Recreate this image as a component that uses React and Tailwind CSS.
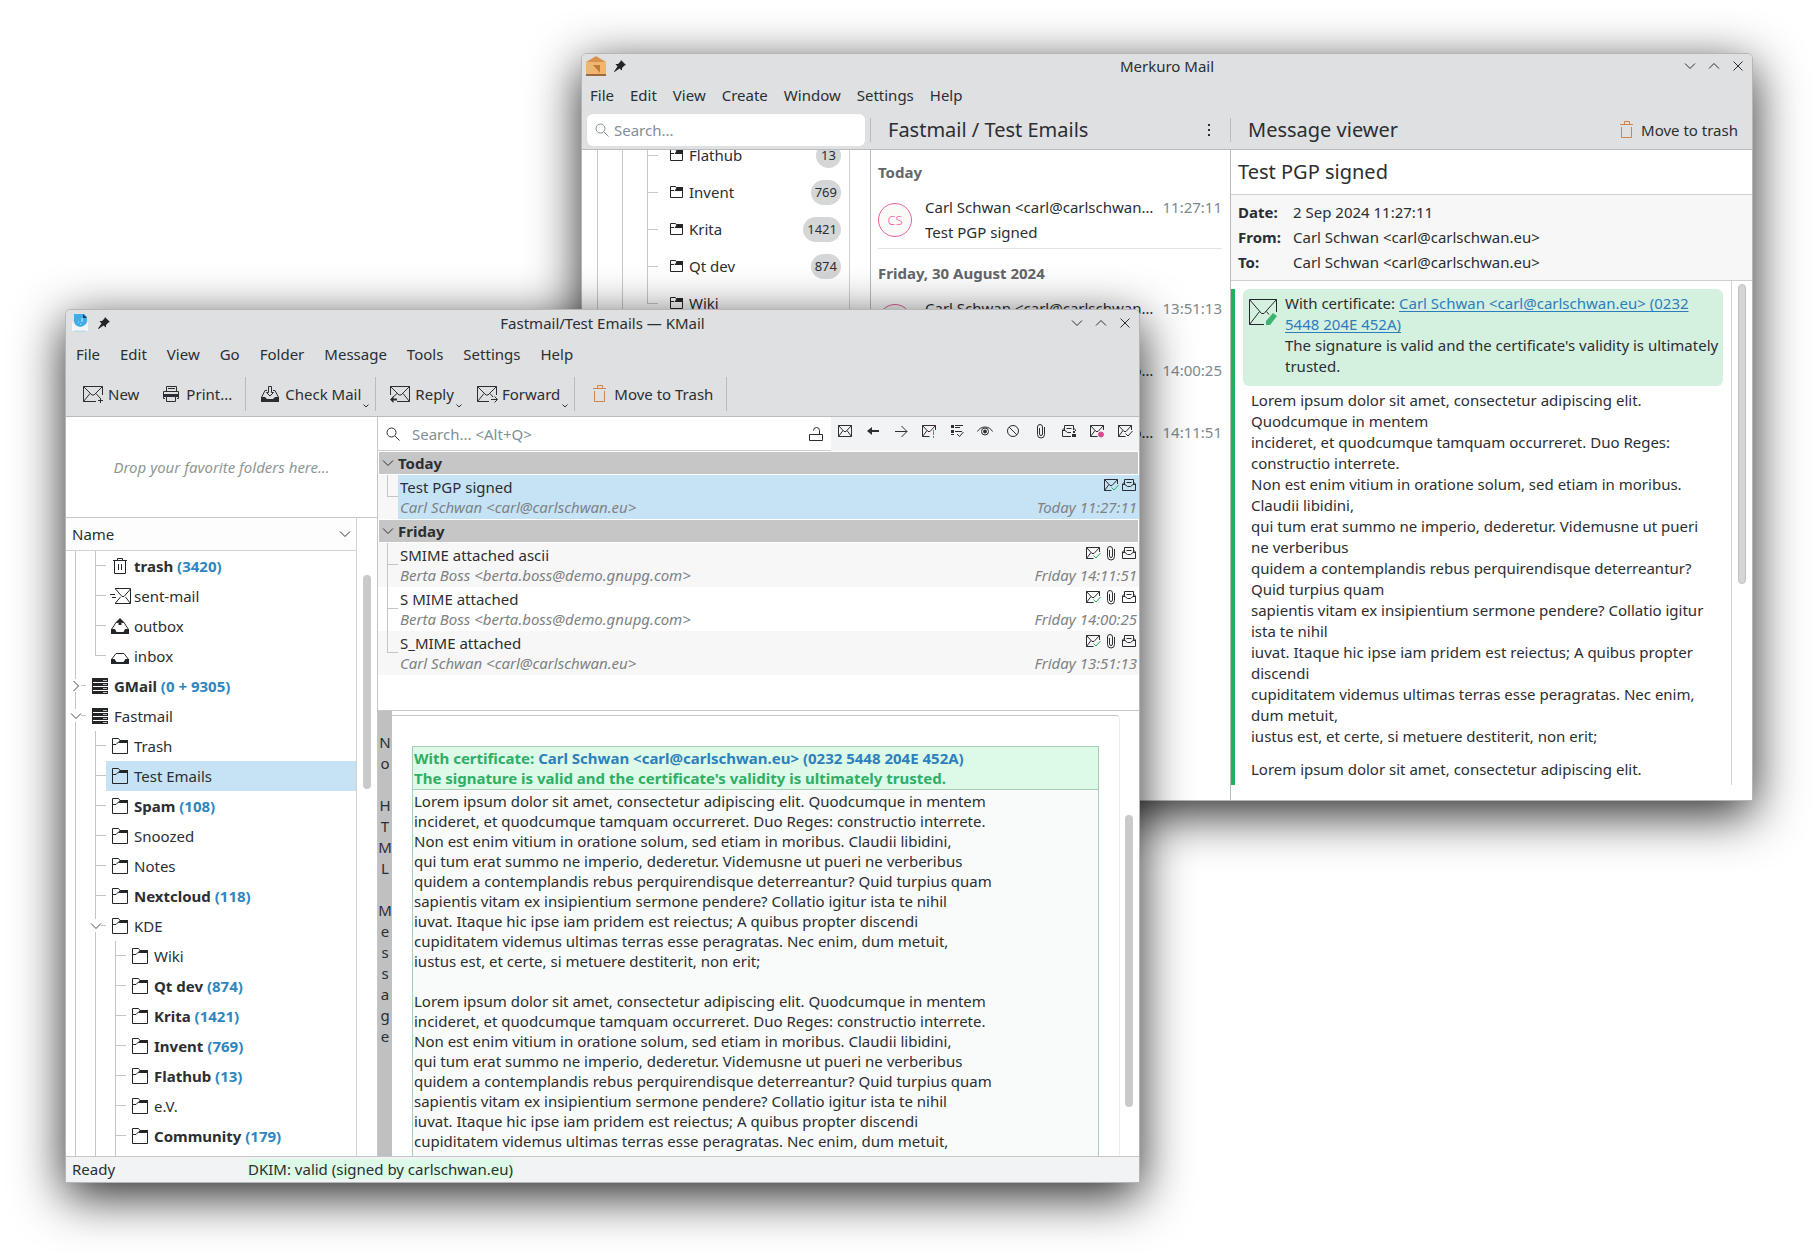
import React from "react";
import clsx from "clsx";

const LOREM = [
  "Lorem ipsum dolor sit amet, consectetur adipiscing elit. Quodcumque in mentem",
  "incideret, et quodcumque tamquam occurreret. Duo Reges: constructio interrete.",
  "Non est enim vitium in oratione solum, sed etiam in moribus. Claudii libidini,",
  "qui tum erat summo ne imperio, dederetur. Videmusne ut pueri ne verberibus",
  "quidem a contemplandis rebus perquirendisque deterreantur? Quid turpius quam",
  "sapientis vitam ex insipientium sermone pendere? Collatio igitur ista te nihil",
  "iuvat. Itaque hic ipse iam pridem est reiectus; A quibus propter discendi",
  "cupiditatem videmus ultimas terras esse peragratas. Nec enim, dum metuit,",
  "iustus est, et certe, si metuere destiterit, non erit;",
];

const kmailFolders = [
  { name: "trash", count: "3420", icon: "bin", guides: ["line", "tee"] },
  { name: "sent-mail", icon: "sent", guides: ["line", "tee"] },
  { name: "outbox", icon: "outbox", guides: ["line", "tee"] },
  { name: "inbox", icon: "inbox", guides: ["line", "end"] },
  { name: "GMail", count: "0 + 9305", icon: "server", guides: ["closed"] },
  { name: "Fastmail", icon: "server", guides: ["open"] },
  { name: "Trash", icon: "folder", guides: ["line", "tee"] },
  { name: "Test Emails", icon: "folder", guides: ["line", "tee"], selected: true },
  { name: "Spam", count: "108", icon: "folder", guides: ["line", "tee"] },
  { name: "Snoozed", icon: "folder", guides: ["line", "tee"] },
  { name: "Notes", icon: "folder", guides: ["line", "tee"] },
  { name: "Nextcloud", count: "118", icon: "folder", guides: ["line", "tee"] },
  { name: "KDE", icon: "folder", guides: ["line", "open"] },
  { name: "Wiki", icon: "folder", guides: ["line", "line", "tee"] },
  { name: "Qt dev", count: "874", icon: "folder", guides: ["line", "line", "tee"] },
  { name: "Krita", count: "1421", icon: "folder", guides: ["line", "line", "tee"] },
  { name: "Invent", count: "769", icon: "folder", guides: ["line", "line", "tee"] },
  { name: "Flathub", count: "13", icon: "folder", guides: ["line", "line", "tee"] },
  { name: "e.V.", icon: "folder", guides: ["line", "line", "tee"] },
  { name: "Community", count: "179", icon: "folder", guides: ["line", "line", "tee"] },
];

const merkuroFolders = [
  { name: "Flathub", count: "13" },
  { name: "Invent", count: "769" },
  { name: "Krita", count: "1421" },
  { name: "Qt dev", count: "874" },
  { name: "Wiki", last: true },
];

const kmailGroups = [
  {
    day: "Today",
    mails: [
      {
        subject: "Test PGP signed",
        from: "Carl Schwan <carl@carlschwan.eu>",
        time: "Today 11:27:11",
        selected: true,
      },
    ],
  },
  {
    day: "Friday",
    mails: [
      {
        subject: "SMIME attached ascii",
        from: "Berta Boss <berta.boss@demo.gnupg.com>",
        time: "Friday 14:11:51",
        attachment: true,
      },
      {
        subject: "S MIME attached",
        from: "Berta Boss <berta.boss@demo.gnupg.com>",
        time: "Friday 14:00:25",
        attachment: true,
      },
      {
        subject: "S_MIME attached",
        from: "Carl Schwan <carl@carlschwan.eu>",
        time: "Friday 13:51:13",
        attachment: true,
      },
    ],
  },
];

const merkuroGroups = [
  {
    day: "Today",
    divider: true,
    mails: [
      { initials: "CS", from: "Carl Schwan <carl@carlschwan.eu>", subject: "Test PGP signed", time: "11:27:11" },
    ],
  },
  {
    day: "Friday, 30 August 2024",
    mails: [
      { initials: "CS", from: "Carl Schwan <carl@carlschwan.eu>", subject: "S_MIME attached", time: "13:51:13" },
      { initials: "BB", from: "Berta Boss <berta.boss@demo.gnupg.com>", subject: "S MIME attached", time: "14:00:25" },
      { initials: "BB", from: "Berta Boss <berta.boss@demo.gnupg.com>", subject: "SMIME attached ascii", time: "14:11:51" },
    ],
  },
];

/* ---------- icons ---------- */

function Svg({ size = 16, className, children }) {
  return (
    <svg
      width={size}
      height={size}
      viewBox={`0 0 ${size} ${size}`}
      fill="none"
      stroke="currentColor"
      className={clsx("shrink-0", className)}
      aria-hidden="true"
    >
      {children}
    </svg>
  );
}

const Envelope = ({ open }) => (
  <>
    <path d={open ? "M8.5 13.5H1.5V2.5H14.5V7" : "M1.5 2.5H14.5V13.5H1.5Z"} />
    <path d="M1.5 2.5L7 8.5H9L14.5 2.5" />
    <path d={open ? "M1.5 13.5L6 7.5" : "M1.5 13.5L6 7.5M14.5 13.5L10 7.5"} />
  </>
);

const BigEnvelope = () => <path d="M1.5 3.5L10 12H12L20.5 3.5M1.5 18.5L8 10.5" />;

const icons = {
  folder: (
    <>
      <path d="M0.5 15.5V0.5H6.5L8 2.5H15.5V15.5Z" />
      <path d="M8 2H16V5H6Z" fill="currentColor" stroke="none" />
      <path d="M0.5 6.5H4L7 3.5" />
    </>
  ),
  smallFolder: (
    <>
      <path d="M1.5 13.5V2.5H6.5L8 4.5H13.5V13.5Z" />
      <path d="M8 3H14V7H5.5Z" fill="currentColor" stroke="none" />
      <path d="M1.5 6.5H5" />
    </>
  ),
  bin: (
    <>
      <path d="M1 2.5H15M5.5 2V0.5H10.5V2M2.5 2.5V15.5H13.5V2.5" />
      <path d="M6.5 6V12M9.5 6V12" />
    </>
  ),
  sent: (
    <>
      <path d="M3 0.5H18.5V15.5H3M3.5 1L10 8.5H12L18.5 1M3.5 15L8.5 9M18.5 15.5L13.5 9" />
      <path d="M-2 6.5H3M0 9.5H4" />
    </>
  ),
  outbox: (
    <>
      <path d="M-0.5 11.5L4 4.5H6M16.5 11.5L12 4.5H10M-0.5 11V15.5H16.5V11" />
      <path d="M-1 11H3L4.5 14H11.5L13 11H17V16H-1Z" fill="currentColor" stroke="none" />
      <path d="M3.5 4.5L8 0L12.5 4.5H9.5V7H6.5V4.5Z" fill="currentColor" stroke="none" />
    </>
  ),
  inbox: (
    <>
      <path d="M-0.5 11.5L4 5.5H12L16.5 11.5V15.5H-0.5Z" />
      <path d="M-1 11H2.5L4.5 14H11.5L13.5 11H17V16H-1Z" fill="currentColor" stroke="none" />
    </>
  ),
  server: (
    <>
      <path d="M0 0H16V16H0Z" fill="currentColor" stroke="none" />
      <path d="M1 4.5H16M1 8.5H16M1 12.5H16" stroke="#fff" />
      <path d="M11 2.5H15M11 6.5H15M11 10.5H15M11 14.5H15" stroke="#b9bbbc" />
    </>
  ),
};

function FolderIcon({ name }) {
  return <Svg className="overflow-visible text-[#232629]">{icons[name]}</Svg>;
}

const NewMailIcon = () => (
  <Svg size={22}>
    <path d="M14 18.5H1.5V3.5H20.5V12" />
    <BigEnvelope />
    <path d="M18 15L14 10.5M16 17.5H21M18.5 15V20" />
  </Svg>
);

const PrintIcon = () => (
  <Svg size={22}>
    <path d="M6.5 8V3.5H16.5V8M8 5.5H15M5 15.5H3.5V8.5H18.5V15.5H17" />
    <path d="M3 11H19V14H3Z" fill="currentColor" stroke="none" />
    <path d="M6.5 13.5H15.5V18.5H6.5Z" fill="#dee0e2" />
  </Svg>
);

const CheckMailIcon = () => (
  <Svg size={22}>
    <path d="M2.5 14.5L6 7.5H8M19.5 14.5L16 7.5H14M2.5 14V18.5H19.5V14" />
    <path d="M2 14H6L8 16H14L16 14H20V19H2Z" fill="currentColor" stroke="none" />
    <path d="M9.5 3.5H12.5V9.5H14.5L11 13L7.5 9.5H9.5Z" />
  </Svg>
);

const ReplyIcon = () => (
  <Svg size={22}>
    <path d="M8 18.5H20.5V3.5H1.5V12M1.5 3.5L10 12H12L20.5 3.5M20.5 18.5L14 10.5M3 15L8 10.5" />
    <path d="M1 16.5L4.5 13V15.5H8V17.5H4.5V20Z" fill="currentColor" stroke="none" />
  </Svg>
);

const ForwardIcon = () => (
  <Svg size={22}>
    <path d="M13 18.5H1.5V3.5H20.5V12" />
    <BigEnvelope />
    <path d="M17 14L14 10.5M15 16.5H21M18.5 13.5L21.5 16.5L18.5 19.5" />
  </Svg>
);

const TrashIcon = () => (
  <Svg size={22} className="text-[#cf8449]">
    <path d="M5 5.5H18M9.5 5V2.5H14.5V5M6.5 8V18.5H16.5V8" />
  </Svg>
);

const SearchIcon = ({ className }) => (
  <Svg className={className}>
    <circle cx="6.5" cy="6.5" r="4.5" />
    <path d="M10 10L14.5 14.5" />
  </Svg>
);

const PinIcon = () => (
  <Svg size={12} className="text-[#232629]">
    <path d="M7 0L12 5L10.5 5.5L8 8V10.5L5.5 8.5L0.5 12L0 11.5L3.5 6.5L1.5 4H4L6.5 1.5Z" fill="currentColor" stroke="none" />
  </Svg>
);

const ChevronDown = ({ className }) => (
  <Svg size={12} className={className}>
    <path d="M1 3.5L6 8.5L11 3.5" />
  </Svg>
);

const MailSigned = () => (
  <Svg>
    <Envelope open />
    <path d="M8.5 10.5L11 13L15.5 8" stroke="#27ae60" />
  </Svg>
);

const MailRead = () => (
  <Svg>
    <path d="M3.5 5L1.5 7V13.5H14.5V7L12.5 5M3.5 7V2.5H12.5V7" />
    <path d="M1.5 7.5H4L6.5 9.5H9.5L12 7.5H14.5M5.5 5.5H10.5" />
  </Svg>
);

const Clip = () => (
  <Svg>
    <path d="M11.5 4V11.5A3.5 3.5 0 0 1 4.5 11.5V4A2.5 2.5 0 0 1 9.5 4V11A1.5 1.5 0 0 1 6.5 11V5" />
  </Svg>
);

const filterIcons = [
  { label: "Unread", icon: <Svg><Envelope /></Svg> },
  {
    label: "Replied",
    icon: (
      <Svg>
        <path d="M2 8L7 4V7H14V9H7V12Z" fill="currentColor" stroke="none" />
      </Svg>
    ),
  },
  { label: "Forwarded", icon: <Svg><path d="M2 8.5H14M8.5 3L14 8.5L8.5 14" /></Svg> },
  {
    label: "Important",
    icon: (
      <Svg>
        <Envelope open />
        <path d="M12.5 7V12M12.5 13V15" stroke="#da4a8f" />
      </Svg>
    ),
  },
  {
    label: "Action item",
    icon: (
      <Svg>
        <path d="M2 2H5V5H2ZM2 7H5V10H2Z" fill="currentColor" stroke="none" />
        <path d="M6 2.5H14M6 4.5H11M6 8.5H13M2 11.5H5M8 11L10.5 13.5L14.5 9" />
      </Svg>
    ),
  },
  {
    label: "Watched",
    icon: (
      <Svg>
        <path d="M0.5 8.5C3.5 2.5 12.5 2.5 15.5 8.5" />
        <circle cx="8" cy="8.5" r="3.5" />
        <circle cx="8" cy="8.5" r="1.5" fill="currentColor" />
      </Svg>
    ),
  },
  {
    label: "Ignored",
    icon: (
      <Svg>
        <circle cx="8" cy="8" r="5.5" />
        <path d="M4 4L12 12" />
      </Svg>
    ),
  },
  { label: "Attachment", icon: <Clip /> },
  {
    label: "Invitation",
    icon: (
      <Svg>
        <path d="M10 13.5H1.5V7L3.5 5M14.5 8V7L12.5 5M3.5 7.5V2.5H12.5V7M1.5 7.5H4L6.5 9.5H10M5.5 5.5H10.5" />
        <path d="M12 8H14V10H12ZM11 11H15V14H11Z" fill="currentColor" stroke="none" />
      </Svg>
    ),
  },
  {
    label: "Spam",
    icon: (
      <Svg>
        <Envelope open />
        <circle cx="12" cy="11.5" r="2.5" fill="#da4a8f" stroke="#da4a8f" />
      </Svg>
    ),
  },
  {
    label: "Ham",
    icon: (
      <Svg>
        <Envelope open />
        <path d="M8.5 10.5L11 13L15.5 8" />
      </Svg>
    ),
  },
];

/* ---------- shared window parts ---------- */

function AppWindow({ className, children }) {
  return (
    <section
      className={clsx(
        "absolute flex flex-col overflow-hidden rounded-t-md border border-[#b4b6b8] bg-white shadow-[0_13px_50px_rgba(0,0,0,0.85)]",
        className
      )}
    >
      {children}
    </section>
  );
}

function TitleBar({ title, icon, className }) {
  return (
    <div className={clsx("grid shrink-0 grid-cols-[1fr_auto_1fr] items-center bg-[#dee0e2]", className)}>
      <div className="flex items-center gap-2 pl-1">
        {icon}
        <PinIcon />
      </div>
      <h1>{title}</h1>
      <div className="flex justify-end gap-3 pr-2">
        <button aria-label="Minimize">
          <ChevronDown />
        </button>
        <button aria-label="Maximize">
          <Svg size={12}>
            <path d="M1 8.5L6 3.5L11 8.5" />
          </Svg>
        </button>
        <button aria-label="Close">
          <Svg size={12}>
            <path d="M1.5 1.5L10.5 10.5M10.5 1.5L1.5 10.5" />
          </Svg>
        </button>
      </div>
    </div>
  );
}

function ToolButton({ icon, label, menu }) {
  return (
    <button className={clsx("relative flex items-center gap-1 pl-2", menu ? "pr-[9px]" : "pr-2")}>
      {icon}
      {label}
      {menu && (
        <svg
          className="absolute right-0 -bottom-1"
          width="8"
          height="6"
          viewBox="0 0 8 6"
          fill="none"
          stroke="currentColor"
          aria-hidden="true"
        >
          <path d="M1.5 1.5L4 4L6.5 1.5" />
        </svg>
      )}
    </button>
  );
}

const Separator = () => <span className="h-[34px] w-px bg-[#b9bbbd]" />;

/* ---------- Merkuro ---------- */

function MerkuroTree() {
  return (
    <ul className="-mt-[13px] mr-5 grow border-r border-[#d3d3d3] pl-[3px]">
      {merkuroFolders.map((folder) => (
        <li key={folder.name} className="flex h-[37px] items-center pr-2">
          <span className="relative h-full w-[25px]">
            <span className="absolute left-3 h-full w-px bg-[#c9c9c9]" />
          </span>
          <span className="relative h-full w-[25px]">
            <span className="absolute left-3 h-full w-px bg-[#c9c9c9]" />
          </span>
          <span className="relative h-full w-[25px]">
            <span className={clsx("absolute left-3 w-px bg-[#c9c9c9]", folder.last ? "h-[19px]" : "h-full")} />
            <span className="absolute top-[18px] left-3 h-px w-[11px] bg-[#c9c9c9]" />
          </span>
          <span className="flex grow items-center gap-1 pb-[2px] pl-[9px]">
            <FolderIcon name="smallFolder" />
            {folder.name}
          </span>
          {folder.count && (
            <span className="h-[25px] min-w-[25px] rounded-full bg-[#d4d6d8] px-1 text-center text-[13px] leading-[25px]">
              {folder.count}
            </span>
          )}
        </li>
      ))}
    </ul>
  );
}

function MerkuroList() {
  return (
    <div className="flex flex-col">
      {merkuroGroups.map((group) => (
        <div key={group.day}>
          <h3 className="h-[39px] pt-3 pl-[7px] font-bold text-[#63666a]">{group.day}</h3>
          {group.mails.map((mail) => (
            <div key={mail.time} className="h-[62px] pr-2 pl-[7px]">
              <div
                className={clsx(
                  "flex h-[60px] items-center gap-[13px] border-b",
                  group.divider ? "border-[#e3e3e3]" : "border-transparent"
                )}
              >
                <span className="mt-[2px] flex size-[34px] shrink-0 items-center justify-center rounded-full border border-[#ea5fa6] bg-[#fafaf7] text-[13px] font-light text-[#ea5fa6]">
                  {mail.initials}
                </span>
                <div className="min-w-0 grow pt-[2px]">
                  <div className="flex h-[25px] items-center gap-2">
                    <span className="grow truncate">{mail.from}</span>
                    <span className="text-[#7a8b92]">{mail.time}</span>
                  </div>
                  <p className="truncate leading-[25px]">{mail.subject}</p>
                </div>
              </div>
            </div>
          ))}
        </div>
      ))}
    </div>
  );
}

function MerkuroViewer() {
  return (
    <article className="flex min-h-0 grow flex-col">
      <h2 className="h-[45px] shrink-0 border-b border-[#cfcfcf] pl-[7px] text-xl leading-[43px]">Test PGP signed</h2>
      <dl className="grid shrink-0 grid-cols-[55px_1fr] gap-y-[5px] border-b border-[#cfcfcf] bg-[#f7f7f7] px-[7px] pt-[7px] pb-[8px]">
        <dt className="font-bold">Date:</dt>
        <dd>2 Sep 2024 11:27:11</dd>
        <dt className="font-bold">From:</dt>
        <dd>Carl Schwan &lt;carl@carlschwan.eu&gt;</dd>
        <dt className="font-bold">To:</dt>
        <dd>Carl Schwan &lt;carl@carlschwan.eu&gt;</dd>
      </dl>
      <div className="mb-[15px] flex min-h-0 grow">
        <div className="mt-2 grow overflow-hidden border-l-4 border-[#27ae60] pr-2 pl-2 leading-[21px]">
          <div className="flex gap-2 rounded-md bg-[#d4f0df] px-[6px] pt-1 pb-[9px]">
            <svg width="28" height="28" viewBox="0 0 28 28" fill="none" stroke="#232629" className="mt-[6px] shrink-0" aria-hidden="true">
              <path d="M15 25.5H0.5V0.5H27.5V13M0.5 0.5L12.5 14.5H15L27.5 0.5M0.5 25.5L10.5 12.5M17.5 12.5L20 15.5" />
              <path d="M17 22L24 14L28 17L21 26H17Z" fill="#3cb371" stroke="none" />
            </svg>
            <div className="-mr-1">
              <p>
                With certificate:{" "}
                <a href="#certificate" className="text-[#2d7dbd] underline underline-offset-2">
                  Carl Schwan &lt;carl@carlschwan.eu&gt; (0232 5448 204E 452A)
                </a>
              </p>
              <p>The signature is valid and the certificate's validity is ultimately trusted.</p>
            </div>
          </div>
          <div className="pt-1 pr-3 pl-2">
            {LOREM.map((line) => (
              <p key={line}>{line}</p>
            ))}
            <p className="mt-3">{LOREM[0]}</p>
          </div>
        </div>
        <div className="w-[21px] shrink-0 border-l border-[#d3d3d3] pt-[3px] pl-[6px]">
          <div className="h-[300px] w-2 rounded-full border border-[#bfc1c2] bg-[#d3d5d6]" />
        </div>
      </div>
    </article>
  );
}

function Merkuro() {
  return (
    <AppWindow className="top-[53px] right-[65px] left-[581px] h-[748px]">
      <TitleBar
        title="Merkuro Mail"
        className="h-6"
        icon={
          <svg width="20" height="20" viewBox="0 0 20 20" aria-hidden="true">
            <path d="M0 6L10 0L20 6V19H0Z" fill="#dc9a56" />
            <path d="M0 19V6L10 3L20 6V19Z" fill="#f0b670" />
            <path d="M1 6L10 1L19 6Z" fill="#d8924f" />
            <path d="M7 9H14V17Z" fill="#c07a3e" />
            <path d="M0 18H20V20H0Z" fill="#9d6a3d" />
          </svg>
        }
      />
      <nav className="flex h-[33px] shrink-0 items-center bg-[#dee0e2]">
        {["File", "Edit", "View", "Create", "Window", "Settings", "Help"].map((item) => (
          <button key={item} className="px-2">
            {item}
          </button>
        ))}
      </nav>
      <div className="grid h-[39px] shrink-0 grid-cols-[288px_360px_1fr] items-center border-b border-[#b9bbbd] bg-[#dee0e2]">
        <label className="mr-[5px] ml-[5px] flex h-8 items-center gap-1 rounded-md bg-white px-[7px] text-[#7f8f95]">
          <SearchIcon />
          <input aria-label="Search mails" placeholder="Search..." className="w-full outline-none placeholder:text-[#7f8f95]" />
        </label>
        <div className="flex h-6 items-center justify-between border-l border-[#b9bbbd] pr-[15px] pl-[17px]">
          <h2 className="text-xl">Fastmail / Test Emails</h2>
          <button aria-label="More actions">
            <svg width="12" height="16" viewBox="0 0 12 16" fill="currentColor" aria-hidden="true">
              <path d="M5 2H7V4H5ZM5 7H7V9H5ZM5 12H7V14H5Z" />
            </svg>
          </button>
        </div>
        <div className="flex h-6 items-center justify-between border-l border-[#b9bbbd] pr-[6px] pl-[17px]">
          <h2 className="text-xl">Message viewer</h2>
          <ToolButton icon={<TrashIcon />} label="Move to trash" />
        </div>
      </div>
      <div className="grid min-h-0 grow grid-cols-[288px_360px_1fr] grid-rows-[minmax(0,1fr)]">
        <div className="flex overflow-hidden">
          <MerkuroTree />
        </div>
        <div className="border-l border-[#b9bbbd]">
          <MerkuroList />
        </div>
        <div className="flex min-w-0 border-l border-[#b9bbbd]">
          <MerkuroViewer />
        </div>
      </div>
    </AppWindow>
  );
}

/* ---------- KMail ---------- */

function Guide({ type }) {
  const expander = type === "open" || type === "closed";
  return (
    <span className="relative h-full w-5 shrink-0">
      {expander ? (
        <>
          <span className="absolute left-[9px] h-2 w-px bg-[#c4c4c4]" />
          <span className="absolute bottom-0 left-[9px] h-[9px] w-px bg-[#c4c4c4]" />
          <span className="absolute top-[14px] left-[15px] h-px w-[5px] bg-[#c4c4c4]" />
          <Svg size={12} className="absolute top-[9px] left-1 text-[#45484b]">
            <path d={type === "open" ? "M1 3.5L6 8.5L11 3.5" : "M3.5 1L8.5 6L3.5 11"} />
          </Svg>
        </>
      ) : (
        <>
          <span className={clsx("absolute left-[9px] w-px bg-[#c4c4c4]", type === "end" ? "h-[15px]" : "h-full")} />
          {type !== "line" && <span className="absolute top-[14px] left-[9px] h-px w-[11px] bg-[#c4c4c4]" />}
        </>
      )}
    </span>
  );
}

function FolderPanel() {
  return (
    <aside className="flex min-h-0 flex-col border-r border-[#c4c6c8]">
      <p className="flex h-[101px] shrink-0 items-center justify-center border-b border-[#c4c6c8] text-[#8e9793] italic">
        Drop your favorite folders here...
      </p>
      <div className="flex min-h-0 grow">
        <div className="flex min-w-0 grow flex-col border-r border-[#d3d3d3]">
          <div className="flex h-[33px] shrink-0 items-center justify-between border-b border-[#d3d3d3] bg-[#fcfdfc] pr-[5px] pl-[6px]">
            Name
            <ChevronDown />
          </div>
          <ul className="flex min-h-0 grow flex-col overflow-hidden">
            {kmailFolders.map((folder, idx) => (
              <li key={idx} className="flex h-[30px] shrink-0">
                {folder.guides.map((type, col) => (
                  <Guide key={col} type={type} />
                ))}
                <span
                  className={clsx(
                    "flex grow items-center gap-[6px] pl-[6px]",
                    folder.selected && "bg-[#c6e3f6]"
                  )}
                >
                  <FolderIcon name={folder.icon} />
                  <span className={clsx(folder.count && "font-bold")}>
                    {folder.name} {folder.count && <span className="text-[#2e86c1]">({folder.count})</span>}
                  </span>
                </span>
              </li>
            ))}
            {/* guides run on to the rows below the fold */}
            <li className="flex grow" aria-hidden="true">
              <Guide type="line" />
              <Guide type="line" />
              <Guide type="line" />
            </li>
          </ul>
        </div>
        <div className="w-5 shrink-0 pt-[57px] pl-[6px]">
          <div className="h-[214px] w-2 rounded-full bg-[#c9cbcb]" />
        </div>
      </div>
    </aside>
  );
}

function MessageList() {
  return (
    <div className="h-[294px] shrink-0 border-b border-[#c4c6c8]">
      <div className="flex h-[34px] bg-[#f2f3f5]">
        <label className="flex grow items-center gap-[11px] border-b border-[#cfcfcf] bg-white px-[7px]">
          <SearchIcon />
          <input
            aria-label="Search messages"
            placeholder="Search... <Alt+Q>"
            className="grow outline-none placeholder:text-[#7f8f95]"
          />
          <Svg>
            <path d="M1.5 8.5H14.5V14.5H1.5ZM11.5 8V4.5A3 3 0 0 0 5.5 4.5" />
          </Svg>
        </label>
        {filterIcons.map((filter) => (
          <button key={filter.label} aria-label={filter.label} className="flex w-7 justify-center pt-[6px]">
            {filter.icon}
          </button>
        ))}
      </div>
      {kmailGroups.map((group) => (
        <div key={group.day}>
          <h3 className="mx-px mt-px flex h-[23px] items-center gap-1 border-b border-white bg-[#c6c6c6] pb-px pl-[3px] font-bold">
            <ChevronDown />
            {group.day}
          </h3>
          {group.mails.map((mail, idx) => (
            <div
              key={mail.time}
              className={clsx("flex h-11", idx % 2 === 0 ? "bg-[#f7f7f7]" : "bg-white")}
            >
              <span className="relative w-5 shrink-0">
                <span
                  className={clsx(
                    "absolute left-[9px] w-px bg-[#c4c4c4]",
                    idx === group.mails.length - 1 ? "h-[22px]" : "h-full"
                  )}
                />
                <span className="absolute top-[21px] left-[9px] h-px w-[11px] bg-[#c4c4c4]" />
              </span>
              <div className={clsx("grow px-[2px] pt-[2px]", mail.selected && "bg-[#c6e3f6]")}>
                <div className="flex h-5 justify-between">
                  <span>{mail.subject}</span>
                  <span className="flex gap-[2px]">
                    <MailSigned />
                    {mail.attachment && <Clip />}
                    <MailRead />
                  </span>
                </div>
                <div className="flex h-5 justify-between text-[#7e8284] italic">
                  <span>{mail.from}</span>
                  <span>{mail.time}</span>
                </div>
              </div>
            </div>
          ))}
        </div>
      ))}
    </div>
  );
}

function MessagePreview() {
  return (
    <div className="flex min-h-0 grow">
      <div className="w-[14px] shrink-0 bg-[#bfc0c2] pt-[21px] text-center leading-[21px]">
        {"No HTML Message".split("").map((letter, idx) => (
          <span key={idx} className="flex h-[21px] justify-center">
            {letter}
          </span>
        ))}
      </div>
      <div className="mt-1 grow overflow-hidden rounded-tr-sm border-t border-r border-t-[#c4c6c8] border-r-[#ececec] pr-5 pl-5">
        <div className="mt-[30px] border border-[#a9cdb8] bg-[#f9fbfa] px-px leading-5">
          <div className="-mx-px border-b border-[#a9cdb8] bg-[#dcfae7] px-px pt-px pb-px font-bold text-[#2fae66]">
            <p>
              With certificate:{" "}
              <a href="#certificate" className="text-[#2e80bd]">
                Carl Schwan &lt;carl@carlschwan.eu&gt; (0232 5448 204E 452A)
              </a>
            </p>
            <p>The signature is valid and the certificate's validity is ultimately trusted.</p>
          </div>
          <div className="pt-px">
            {LOREM.map((line) => (
              <p key={line}>{line}</p>
            ))}
            <div className="mt-5">
              {LOREM.map((line) => (
                <p key={line}>{line}</p>
              ))}
            </div>
          </div>
        </div>
      </div>
      <div className="w-[19px] shrink-0 pt-[104px] pl-[5px]">
        <div className="h-[292px] w-2 rounded-full bg-[#c9cbcb]" />
      </div>
    </div>
  );
}

function KMail() {
  return (
    <AppWindow className="top-[309px] right-[678px] left-[65px] h-[874px]">
      <TitleBar
        title="Fastmail/Test Emails — KMail"
        className="h-[26px]"
        icon={
          <svg width="20" height="20" viewBox="0 0 20 20" aria-hidden="true">
            <path d="M2 9L10 4L18 9V18H2Z" fill="#e9ecee" />
            <path d="M4 1H14L17 4V8A6.5 6 0 0 1 4 8Z" fill="#3daee9" />
            <path d="M13 1L17 5H13Z" fill="#1d3f66" />
            <path d="M12 5V9M8 9H9M10 11H11" stroke="#d7effb" />
            <path d="M2 9L5 12Q10 16 15 12L18 9V18H2Z" fill="#f5f6f7" />
            <path d="M4 18H16" stroke="#a5d8ef" />
          </svg>
        }
      />
      <nav className="flex h-[35px] shrink-0 items-center bg-[#dee0e2]">
        {["File", "Edit", "View", "Go", "Folder", "Message", "Tools", "Settings", "Help"].map((item) => (
          <button key={item} className="px-[10px]">
            {item}
          </button>
        ))}
      </nav>
      <div className="flex h-[46px] shrink-0 items-center gap-[5px] border-b border-[#b9bbbd] bg-[#dee0e2] pl-2">
        <ToolButton icon={<NewMailIcon />} label="New" />
        <ToolButton icon={<PrintIcon />} label="Print..." />
        <Separator />
        <ToolButton icon={<CheckMailIcon />} label="Check Mail" menu />
        <Separator />
        <ToolButton icon={<ReplyIcon />} label="Reply" menu />
        <ToolButton icon={<ForwardIcon />} label="Forward" menu />
        <Separator />
        <ToolButton icon={<TrashIcon />} label="Move to Trash" />
        <Separator />
      </div>
      <div className="grid min-h-0 grow grid-cols-[312px_1fr] grid-rows-[minmax(0,1fr)]">
        <FolderPanel />
        <main className="flex min-h-0 min-w-0 flex-col">
          <MessageList />
          <MessagePreview />
        </main>
      </div>
      <footer className="flex h-[26px] shrink-0 items-center border-t border-[#c4c6c8] bg-[#f1f3f4] pb-[2px] pl-[6px]">
        <span className="w-44">Ready</span>
        <span className="bg-[#dcfae7]">DKIM: valid (signed by carlschwan.eu)</span>
      </footer>
    </AppWindow>
  );
}

export default function App() {
  return (
    <div className="relative min-h-screen overflow-hidden bg-white font-['Noto_Sans',sans-serif] text-[15px] leading-5 text-[#2b2e32]">
      <Merkuro />
      <KMail />
    </div>
  );
}
